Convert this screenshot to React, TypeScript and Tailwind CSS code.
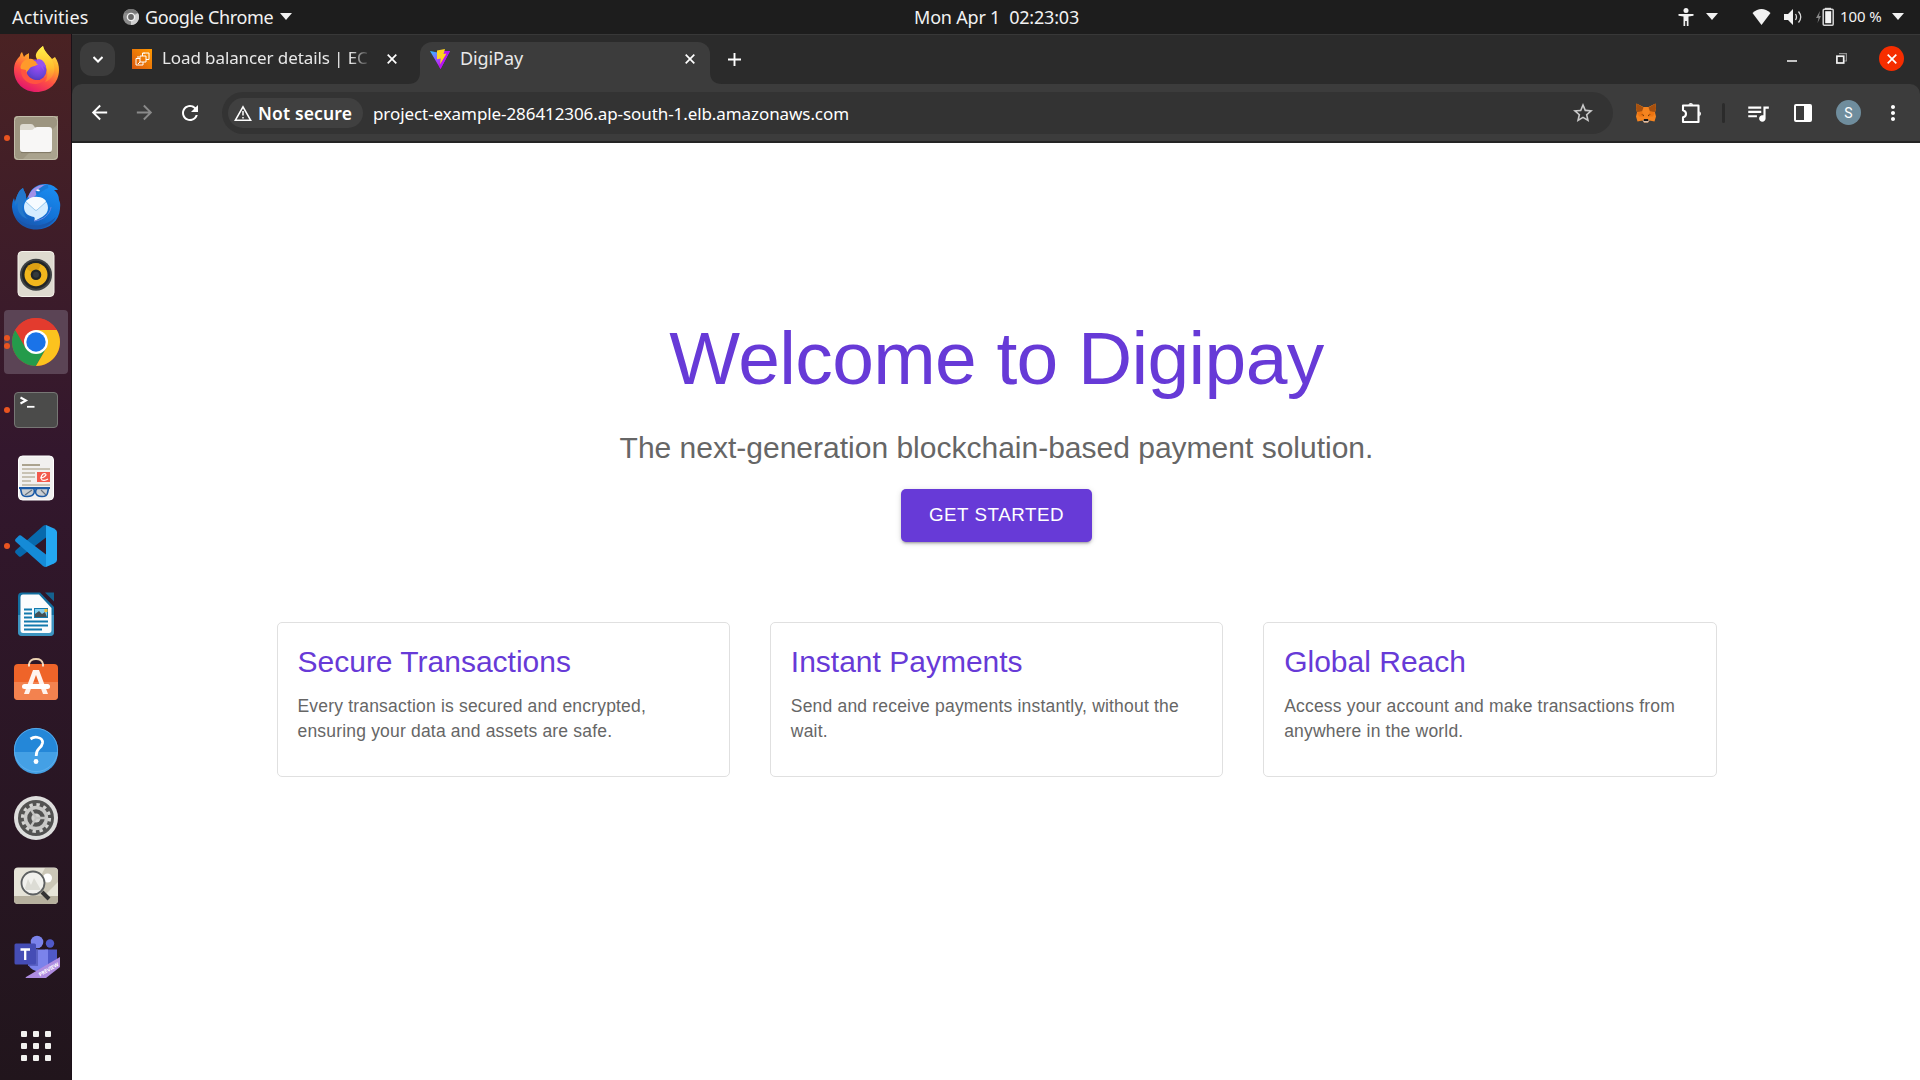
import type { ReactNode } from "react";
import { MdArrowBack, MdArrowForward, MdRefresh, MdStarBorder, MdQueueMusic, MdMoreVert } from "react-icons/md";

const Svg = ({ children }: { children: ReactNode }) => (
  <svg viewBox="0 0 48 48" className="block size-12 overflow-visible">{children}</svg>
);

const Firefox = () => (
  <Svg>
    <defs>
      <linearGradient id="ffa" x1="0.8" y1="0" x2="0.3" y2="1">
        <stop offset="0" stopColor="#fff44f" /><stop offset="0.35" stopColor="#ffa72a" /><stop offset="0.65" stopColor="#ff4f45" /><stop offset="1" stopColor="#e0126f" />
      </linearGradient>
      <linearGradient id="ffb" x1="0.5" y1="0" x2="0.5" y2="1">
        <stop offset="0" stopColor="#fff24a" /><stop offset="0.6" stopColor="#ffbd2e" /><stop offset="1" stopColor="#ff7139" />
      </linearGradient>
      <radialGradient id="ffc" cx="0.6" cy="0.3" r="0.8">
        <stop offset="0" stopColor="#a04bf5" /><stop offset="0.6" stopColor="#6b45d8" /><stop offset="1" stopColor="#4a35b0" />
      </radialGradient>
    </defs>
    <path d="M2 24C2 17 5 13 8 10C8 8 9 7 10 6L12 11C14 8 16 8 17 7L17 13L25 14C23 8 27 3 31 0C32 6 37 9 40 13L43 11C46 15 47 20 47 24C47 37 37 46 24.500 46C12 46 2 37 2 24Z" fill="url(#ffa)" />
    <path d="M31 0C32 6 38 9 41 16C45 25 40 34 33 36C36 32 36 26 34 21C32 15 26 15 24 11C23 7 27 3 31 0Z" fill="url(#ffb)" />
    <circle cx="24" cy="24" r="10.500" fill="url(#ffc)" />
    <path d="M9 19C11 14 16 12 20 13C22 14 23 16 27 17C26 20 20 20 18 22C16 25 15 25 14 28C11 25 7 23 9 19Z" fill="#ff9a2b" />
    <path d="M14 24C15 34 27 37 34 31C31 39 20 40 14 35C10 32 9 28 9 23Z" fill="#ff5340" />
    <path d="M26 13C31 13 34 18 34 22L31 20L32 25C29 20 27 19 24 17Z" fill="#9654ed" />
  </Svg>
);

const Files = () => (
  <Svg>
    <rect x="2" y="2" width="44" height="44" rx="4" fill="#aaa38e" />
    <path d="M6 2H46V10L10 46H6Q2 46 2 42V6Q2 2 6 2Z" fill="#9d9580" />
    <rect x="2.500" y="2.500" width="43" height="43" rx="4" fill="none" stroke="#c2bca9" strokeWidth="1" />
    <path d="M8 13Q8 10 11 10H19Q21 10 22 12L24 15H36V24H8Z" fill="#dedad0" />
    <path d="M8 16H19Q21 16 22 14.500T25 13H37Q40 13 40 16V35Q40 38 37 38H11Q8 38 8 35Z" fill="#f8f7f6" />
    <path d="M9 38.600H39" stroke="#7f7865" />
  </Svg>
);

const Thunderbird = () => (
  <Svg>
    <defs><linearGradient id="tb" x1="0.7" y1="0" x2="0.3" y2="1"><stop offset="0" stopColor="#1b8cf0" /><stop offset="0.6" stopColor="#1272d6" /><stop offset="1" stopColor="#1b52a8" /></linearGradient></defs>
    <path d="M17 13C19 6 26 2 33 2C38 2 43 4 46 8L42 8C46 11 47 15 47 18C49 22 48 25 48 27C47 39 38 47 25 47.500C11 48 1 38 0 25C0 21 1 18 2 16L3 20C5 14 6 9 11 6C12 10 15 12 14 17Z" fill="url(#tb)" />
    <path d="M3 20C5 14 6 9 11 6C12 10 15 12 14 17C8 23 10 32 16 37C8 35 4 28 6 20L3 24Z" fill="#2377cb" />
    <path d="M16 15C19 7 26 2 35 3C28 5 27 11 22 15L18 17Z" fill="#a090e8" />
    <path d="M24 11C28 10 30 5 36 4" stroke="#1979d6" strokeWidth="4" fill="none" />
    <path d="M12 25C12 19 17 16 22 15C31 15 36 19 36 26C36 34 26 37 22 39C23 37 23 36 22 35C16 34 12 31 12 25Z" fill="#d6edff" />
    <path d="M14 19Q20 14 26 15Q31 15 34 19L25 28Q24 29 23 28Z" fill="#f6fbff" />
    <path d="M14 20L23 28Q24 29 25 28L34 20" fill="none" stroke="#9ac9ee" />
    <path d="M24 8Q27 6 28 9Q25 10 24 8Z" fill="#fff" />
    <path d="M22 39C32 38 38 32 39 25" fill="none" stroke="#6a85e5" />
    <path d="M3 34C13 46 31 47 44 35C37 49 12 52 3 34Z" fill="#1957ac" />
  </Svg>
);

const Rhythmbox = () => (
  <Svg>
    <rect x="6" y="1.500" width="36" height="45" rx="4" fill="#deDACF" stroke="#f4f1ea" />
    <circle cx="24" cy="24.700" r="16" fill="#3f4244" />
    <circle cx="24" cy="24.700" r="14" fill="#222627" />
    <circle cx="24" cy="24.700" r="11.500" fill="#f1b71d" />
    <path d="M24 24.700L14 18.500A11.500 11.500 0 0 1 29 14.500Z" fill="#dca013" />
    <circle cx="24" cy="24.700" r="5.300" fill="#222627" />
    <circle cx="24" cy="24.700" r="3" fill="#353a3c" />
  </Svg>
);

const Chrome = () => (
  <Svg>
    <circle cx="24" cy="24" r="24" fill="#e33b2e" />
    <path d="M3.220 12A24 24 0 0 0 24 48L34.400 30L24 24Z" fill="#249b4b" />
    <path d="M24 48A24 24 0 0 0 44.780 12H24L34.400 30Z" fill="#fcc31e" />
    <path d="M3.220 12A24 24 0 0 1 44.780 12H24L13.600 30Z" fill="#e33b2e" />
    <circle cx="24" cy="24" r="12" fill="#fff" />
    <circle cx="24" cy="24" r="9.700" fill="#1a73e8" />
  </Svg>
);

const TerminalIcon = () => (
  <Svg>
    <rect x="2.500" y="6.500" width="43" height="35" rx="3.500" fill="#4b4b4a" stroke="#777775" />
    <path d="M8.500 11.500L14 14.500L8.500 17.500" fill="none" stroke="#fff" strokeWidth="2" />
    <path d="M15 20.800H22.500" stroke="#fff" strokeWidth="1.800" />
  </Svg>
);

const Evince = () => (
  <Svg>
    <rect x="6.500" y="2" width="35" height="44" rx="4" fill="#f1f0ef" stroke="#fff" />
    <path d="M10 11H28" stroke="#aba38f" strokeWidth="2" />
    <path d="M10 15H38M10 19H23M10 23H23M10 27H19M10 31H38" stroke="#c8c2b4" strokeWidth="2" />
    <rect x="25" y="18" width="13" height="10" fill="#f2594d" />
    <path d="M28 24Q32 24 34 21Q34 19 31 20Q28 23 30 26Q33 27 36 25" fill="none" stroke="#fff" strokeWidth="1.200" />
    <g fill="#b9bfc6" fillOpacity="0.7" stroke="#1b5aa6" strokeWidth="1.600"><path d="M8.500 34.500H21Q23 35 22 39Q21 42.500 15 42.500Q10 42.500 9.500 39Z" /><path d="M24 36Q24 34.500 26 34.500H36.500L35.500 39Q35 42.500 30 42.500Q24 42.500 23.500 38Z" /></g>
    <path d="M7 34H38" stroke="#1b5aa6" strokeWidth="2" />
    <path d="M13 41L20 36M29 36L34 41" stroke="#66727f" strokeWidth="1.200" />
  </Svg>
);

const VsCode = () => (
  <Svg>
    <path d="M34 3L42 6.500Q45 8 45 10V38Q45 40 42 41.500L34 45Z" fill="#24a7f2" />
    <path d="M3.500 31L7 34.500Q8 35 9 34.500L34 15.500V3Q32 3 31 4L3.500 28.500Q2.500 30 3.500 31Z" fill="#0769ad" />
    <path d="M3.500 17L7 13.500Q8 13 9 13.500L34 32.500V45Q32 45 31 44L3.500 19.500Q2.500 18 3.500 17Z" fill="#158bd7" />
  </Svg>
);

const Writer = () => (
  <Svg>
    <path d="M10 2.500H28L42 17V42Q42 46 38 46H10Q6 46 6 42V6.500Q6 2.500 10 2.500Z" fill="#126e9f" />
    <path d="M6 25H42V42Q42 46 38 46H10Q6 46 6 42Z" fill="#3d94c0" />
    <path d="M11 4.500H27L39.500 18V40Q39.500 43 37 43H11Q8.500 43 8.500 40V7.500Q8.500 4.500 11 4.500Z" fill="#fbfcfd" />
    <path d="M33 2.500H42V11.500Z" fill="#15618e" />
    <path d="M12 19.500H20M12 23.500H20M12 27.500H20M12 31.500H36M12 35.500H36M12 39.500H30" stroke="#1279ad" strokeWidth="2" />
    <rect x="22.500" y="18.500" width="13" height="9" fill="#83cfee" stroke="#1279ad" />
    <path d="M23 27V24L27 21L30 24L33 22L35 27Z" fill="#445054" /><rect x="32.500" y="19" width="3" height="3" fill="#f4bd32" />
  </Svg>
);

const Software = () => (
  <Svg>
    <path d="M17 9V6Q18 1 24 1Q30 1 31 6V9" fill="none" stroke="#ecd2b2" strokeWidth="1.800" />
    <rect x="2" y="6" width="44" height="36" rx="4" fill="#ef6429" />
    <path d="M2 24H46V38Q46 42 42 42H6Q2 42 2 38Z" fill="#f3824f" />
    <path d="M17 6V8.500M31 6V8.500" stroke="#f5dfc9" strokeWidth="2" />
    <path d="M21 12H27L36 36H31L24 17L17 36H12Z" fill="#fff3ee" />
    <rect x="10" y="26" width="28" height="5" rx="2.500" fill="#fff" />
  </Svg>
);

const Help = () => (
  <Svg>
    <circle cx="24" cy="24" r="22" fill="#2487d8" /><path d="M2 26H46A22 22 0 0 1 2 26Z" fill="#44a0e5" />
    <circle cx="24" cy="24" r="21.600" fill="none" stroke="#63b3ef" strokeWidth="0.800" />
    <path d="M18.500 13Q22 10.500 26 11.500Q31 12.500 30.500 17Q30 20 27 22.500Q24.200 25 24.200 30" fill="none" stroke="#fff" strokeWidth="2.800" />
    <circle cx="24" cy="35.500" r="2.400" fill="#fff" />
  </Svg>
);

const Settings = () => (
  <Svg>
    <circle cx="24" cy="24" r="22" fill="#dededd" /><circle cx="24" cy="24" r="18" fill="#535352" />
    <circle cx="24" cy="24" r="13.500" fill="none" stroke="#d4d4d2" strokeWidth="3.200" strokeDasharray="3.400 3.670" />
    <circle cx="24" cy="24" r="10.500" fill="none" stroke="#c9c9c7" strokeWidth="3.500" />
    <circle cx="24" cy="24" r="4.600" fill="#d4d4d2" />
    <path d="M24 24H34M24 24L19 15.500M24 24L19 32.500" stroke="#c3c3c1" strokeWidth="2.400" />
  </Svg>
);

const Magnifier = () => (
  <Svg>
    <rect x="2" y="5.500" width="44" height="36.500" rx="4" fill="#e6e4d8" />
    <path d="M33 6H42Q46 6 46 10V20L32 34H18Z" fill="#cbc7b7" />
    <path d="M2 34H46V38Q46 42 42 42H6Q2 42 2 38Z" fill="#b6b09e" />
    <circle cx="35.500" cy="16" r="4.500" fill="#fff" />
    <circle cx="21" cy="21" r="11.500" fill="#f1f1ed" stroke="#5d6061" strokeWidth="1.800" />
    <path d="M13 26L16 17L19 23L22 16L29 28H14Z" fill="#dcdcd5" />
    <path d="M30 30L37 37" stroke="#343434" strokeWidth="4" />
  </Svg>
);

const Teams = () => (
  <Svg>
    <circle cx="25" cy="12" r="6.300" fill="#7b83eb" /><circle cx="38" cy="13.500" r="4.200" fill="#5059c9" />
    <path d="M33 19.500H45V35Q41 40 35 37Z" fill="#5059c9" />
    <path d="M16 19.500H36V36Q30 42 24 41Q17 39 16 33Z" fill="#7b83eb" />
    <path d="M22 19.500H26V36H16V34H22Z" fill="#5a62c3" />
    <rect x="2.500" y="13.500" width="21.500" height="21" rx="1.500" fill="#454db5" />
    <path d="M8.500 19.500H18M13.200 19.500V30" stroke="#fff" strokeWidth="2.300" />
    <path d="M48 27V37L34 48H14Q13 48 14 47Z" fill="#ae8ce0" />
    <text transform="translate(28 46.500) rotate(-30)" fill="#fff" fontSize="5.200" fontWeight="700" fontFamily="Noto Sans, sans-serif" textLength="22">PREVIEW</text>
  </Svg>
);

const Dot = ({ at }: { at: string }) => <span className={`absolute left-1 size-1.5 rounded-full bg-[#e95420] ${at}`} />;

const dock: { name: string; icon: ReactNode; dots: number; active?: boolean }[] = [
  { name: "Firefox", icon: <Firefox />, dots: 0 },
  { name: "Files", icon: <Files />, dots: 1 },
  { name: "Thunderbird", icon: <Thunderbird />, dots: 0 },
  { name: "Rhythmbox", icon: <Rhythmbox />, dots: 0 },
  { name: "Chrome", icon: <Chrome />, dots: 2, active: true },
  { name: "Terminal", icon: <TerminalIcon />, dots: 1 },
  { name: "Document Viewer", icon: <Evince />, dots: 0 },
  { name: "Code", icon: <VsCode />, dots: 1 },
  { name: "Writer", icon: <Writer />, dots: 0 },
  { name: "Software", icon: <Software />, dots: 0 },
  { name: "Help", icon: <Help />, dots: 0 },
  { name: "Settings", icon: <Settings />, dots: 0 },
  { name: "Image Viewer", icon: <Magnifier />, dots: 0 },
  { name: "Teams", icon: <Teams />, dots: 0 },
];

const Dock = () => (
  <nav className="flex w-[72px] shrink-0 flex-col border-r border-[#1b1118] bg-linear-to-b from-[#4a2223] via-[#33172d] via-40% to-[#21151c] pt-0.5">
    {dock.map((d) => (
      <div key={d.name} className="relative flex h-[68px] items-center justify-center pl-px">
        <div className={d.active ? "grid size-16 place-items-center rounded bg-[#5b4455]" : "grid size-16 place-items-center"}>{d.icon}</div>
        {d.dots === 1 && <Dot at="top-[31px]" />}
        {d.dots === 2 && <><Dot at="top-[27px]" /><Dot at="top-[35px]" /></>}
      </div>
    ))}
    <div className="mt-auto mb-[19px] ml-[21px] grid w-[30px] grid-cols-3 gap-1.5">
      {Array.from({ length: 9 }, (_, i) => <span key={i} className="size-1.5 rounded-[1px] bg-[#f2f1ef]" />)}
    </div>
  </nav>
);

const Caret = () => <svg viewBox="0 0 12 7" className="h-[7px] w-3"><path d="M0 0H12L6 7Z" fill="#f2f2f2" /></svg>;

const TopBar = () => (
  <header className="flex h-[34px] items-center bg-[#1d1d1d] pb-px font-['Noto_Sans',sans-serif] text-[18px] leading-none whitespace-pre text-[#f2f2f2]">
    <div className="w-[111px] pl-3 tracking-[0.15px]">Activities</div>
    <div className="flex w-[803px] items-center">
      <svg viewBox="0 0 16 16" className="mx-3 mr-1.5 size-4"><circle cx="8" cy="8" r="8" fill="#8c8c8c" /><path d="M8 8L15 4A8 8 0 0 1 8 16Z" fill="#d0d0d0" /><path d="M1 4A8 8 0 0 1 15 4H8Z" fill="#777" /><circle cx="8" cy="8" r="4.300" fill="#f2f2f2" /><circle cx="8" cy="8" r="2.900" fill="#666" /></svg>
      <span className="mr-[5px] w-[130px] tracking-[-0.35px]">Google Chrome</span>
      <Caret />
    </div>
    <div className="w-[170px] tracking-[-0.2px]">Mon Apr 1  02:23:03</div>
    <div className="flex flex-1 items-center justify-end pr-4">
      <svg viewBox="0 0 16 18" className="mr-3 h-[18px] w-4" fill="#f2f2f2"><circle cx="8" cy="2.500" r="2.500" /><path d="M0.500 6H15.500V7.800L10.500 8.600V18H8.800V13H7.200V18H5.500V8.600L0.500 7.800Z" /></svg>
      <Caret />
      <svg viewBox="0 0 18 16" className="ml-[34px] h-4 w-[19px]" fill="#f2f2f2"><path d="M0 4Q9-4 18 4L9 16Z" /></svg>
      <svg viewBox="0 0 18 16" className="ml-[13px] h-4 w-[18px]"><path d="M0 5H4L9 0V16L4 11H0Z" fill="#f2f2f2" /><path d="M11.500 5Q13.500 8 11.500 11M14.500 2.500Q19 8 14.500 13.500" fill="none" stroke="#d8d8d8" strokeWidth="1.300" /></svg>
      <svg viewBox="0 0 18 19" className="ml-[14px] h-[19px] w-[18px]"><path d="M4 4L0 11H2.500L1.500 16L5 9H3Z" fill="#888" /><path d="M9 2.500V0.800H15V2.500" fill="#eee" /><rect x="7.200" y="2.200" width="10" height="16" rx="1" fill="none" stroke="#d4d4d4" strokeWidth="1.500" /><rect x="9.200" y="4.200" width="6" height="12" fill="#f5f5f5" /></svg>
      <span className="ml-1.5 w-[44px] text-[15px] leading-none tracking-[-0.1px]">100 %</span>
      <span className="ml-2"><Caret /></span>
    </div>
  </header>
);

const Cross = () => <svg viewBox="0 0 10 10" className="size-2.5"><path d="M0.700 0.700L9.300 9.300M9.300 0.700L0.700 9.300" stroke="#fff" strokeWidth="1.700" /></svg>;

const TabStrip = () => (
  <div className="flex h-[50px] items-start border-t border-[#383838] bg-[#2b2b2b] font-['Noto_Sans',sans-serif] text-[17px] text-[#e8e8e8]">
    <div className="mt-[7px] ml-2 grid h-[34px] w-[35px] place-items-center rounded-xl bg-[#3c3c3c]">
      <svg viewBox="0 0 10 7" className="h-[7px] w-2.5"><path d="M0.500 1L5 5.500L9.500 1" fill="none" stroke="#fff" strokeWidth="2" /></svg>
    </div>
    <div className="flex h-[48px] w-[305px] items-center pl-[17px]">
      <svg viewBox="0 0 20 20" className="size-5 shrink-0"><defs><linearGradient id="ec2" x1="0" y1="1" x2="1" y2="0"><stop stopColor="#d85810" /><stop offset="1" stopColor="#ff9900" /></linearGradient></defs><path d="M0 0H20V20H0Z" fill="url(#ec2)" /><path d="M8 7H14V13H8ZM10.500 7V4H17V10.500H14M8 9.500H4V16H11V13M6 7V9M12 5V3.500M8 13L6 15" fill="none" stroke="#fff" strokeWidth="1" /></svg>
      <div className="ml-2.5 w-[209px] mask-r-from-90% pb-0.5 tracking-[-0.1px] whitespace-nowrap">Load balancer details | EC</div>
      <span className="ml-4"><Cross /></span>
    </div>
    <div className="relative mt-[7px] flex h-[42px] w-[290px] items-center rounded-t-xl bg-[#3c3c3c] pr-[15px] pb-2 pl-2.5">
      <svg viewBox="0 0 12 12" className="absolute bottom-0 -left-3 size-3"><path d="M12 0V12H0Q12 12 12 0Z" fill="#3c3c3c" /></svg>
      <svg viewBox="0 0 12 12" className="absolute -right-3 bottom-0 size-3"><path d="M0 0V12H12Q0 12 0 0Z" fill="#3c3c3c" /></svg>
      <svg viewBox="0 0 20 20" className="size-5"><defs><linearGradient id="va" x2="0.6" y2="1"><stop stopColor="#25c8ff" /><stop offset="0.500" stopColor="#9b4dff" /><stop offset="1" stopColor="#d800e8" /></linearGradient></defs><path d="M0 2L10 4L20 2L10.500 20Z" fill="url(#va)" /><path d="M14 2L20 2L10.500 20L9 17Z" fill="#b514f5" /><path d="M7 1.500L15 0L13.500 5L16.500 4.500L10 15.500L10.800 9.500L7 10.300Z" fill="#ffd51f" /></svg>
      <span className="ml-2.5 flex-1 pb-px text-[18px] tracking-[-0.1px]">DigiPay</span>
      <Cross />
    </div>
    <div className="ml-[18px] flex h-[49px] items-center"><svg viewBox="0 0 13 13" className="size-[13px]"><path d="M6.500 0V13M0 6.500H13" stroke="#fff" strokeWidth="1.900" /></svg></div>
    <div className="ml-auto flex h-[47px] items-center pr-4">
      <span className="mt-[5px] mr-[39px] h-[2px] w-2.5 bg-[#c5c5c5]" />
      <svg viewBox="0 0 11 11" className="mr-[32px] size-[11px]"><path d="M3 0.600H10.400V8H8" fill="none" stroke="#909090" strokeWidth="1.200" /><rect x="0.900" y="3.200" width="6.800" height="6.800" fill="none" stroke="#f2f2f2" strokeWidth="1.700" /></svg>
      <span className="grid size-[25px] place-items-center rounded-full bg-[#f62d00]"><Cross /></span>
    </div>
  </div>
);

const Fox = () => (
  <svg viewBox="0 0 20 19" className="size-5">
    <path d="M0.500 0L7.500 3.500H12.500L19.500 0L20 5L19 9L20 13L18.500 18L13.500 17L12 19H8L6.500 17L1.500 18L0 13L1 9L0 5Z" fill="#f5841f" />
    <path d="M0.500 0L7.500 4L6 8L1 8.500L0 5ZM19.500 0L12.500 4L14 8L19 8.500L20 5Z" fill="#a5500f" />
    <path d="M1 9L6 8L8 13L3 13ZM19 9L14 8L12 13L17 13Z" fill="#ee7410" />
    <path d="M5 10.500L8 11.500V12.800ZM15 10.500L12 11.500V12.800Z" fill="#6b3408" />
    <path d="M6.500 16.500H13.500L12 19H8Z" fill="#d5bfb2" /><path d="M8 15.500H12L12.500 17.500H7.500Z" fill="#161616" />
  </svg>
);

const Puzzle = () => (
  <svg viewBox="0 0 22 22" className="size-[22px]" fill="none" stroke="#fff" strokeWidth="2.100" strokeLinejoin="round">
    <path d="M2 3.500H17.500V20H2V15.300Q5 14.500 5 11.700Q5 9 2 8.200Z" />
    <path d="M7.300 2.700A2.700 2.700 0 0 1 12.300 2.700ZM18.300 9.200A2.700 2.700 0 0 1 18.300 14.200Z" fill="#fff" stroke="none" />
  </svg>
);

const Toolbar = () => (
  <div className="bg-[#2b2b2b]">
    <div className="flex h-[59px] items-center rounded-t-[10px] border-b-2 border-[#242424] bg-[#3c3c3c] text-white">
      <MdArrowBack className="ml-4 size-[23px]" />
      <MdArrowForward className="ml-[22px] size-[23px] text-[#8a8a8a]" />
      <MdRefresh className="ml-[22px] size-[24px]" />
      <div className="ml-5 flex h-[42px] w-[1391px] items-center rounded-full bg-[#333333] pl-1.5 font-['Noto_Sans',sans-serif]">
        <div className="flex h-[30px] w-[135px] items-center rounded-full bg-[#404040] pl-1.5">
          <svg viewBox="0 0 18 16" className="h-4 w-[18px]"><path d="M9 1.800L16.600 15.200H1.400Z" fill="none" stroke="#fff" strokeWidth="1.600" /><path d="M9 6V10.500M9 12V13.500" stroke="#fff" strokeWidth="1.500" /></svg>
          <span className="ml-1.5 pt-0.5 text-[17.5px] leading-none font-semibold tracking-[0.15px] whitespace-nowrap">Not secure</span>
        </div>
        <span className="ml-2.5 flex-1 pt-0.5 text-[17px] leading-none tracking-[-0.08px]">project-example-286412306.ap-south-1.elb.amazonaws.com</span>
        <MdStarBorder className="mr-[18px] size-6 text-[#c8c8c8]" />
      </div>
      <span className="ml-[23px]"><Fox /></span>
      <span className="ml-[25px]"><Puzzle /></span>
      <span className="ml-[19px] h-5 w-[3px] rounded bg-[#2b2b2b]" />
      <MdQueueMusic className="ml-5 size-[26px]" />
      <svg viewBox="0 0 18 18" className="ml-[23px] size-[18px]"><rect x="1" y="1" width="16" height="16" rx="1" fill="none" stroke="#fff" strokeWidth="2" /><path d="M10 1H17V17H10Z" fill="#fff" /></svg>
      <span className="ml-6 grid size-[25px] place-items-center rounded-full bg-[#6f8d9d] font-['Roboto',sans-serif] text-sm">S</span>
      <MdMoreVert className="ml-5 size-6" />
    </div>
  </div>
);

const features = [
  { title: "Secure Transactions", text: "Every transaction is secured and encrypted, ensuring your data and assets are safe." },
  { title: "Instant Payments", text: "Send and receive payments instantly, without the wait." },
  { title: "Global Reach", text: "Access your account and make transactions from anywhere in the world." },
];

const Page = () => (
  <main className="flex flex-1 flex-col items-center bg-white pt-[170px] pl-px font-['Liberation_Sans',sans-serif]">
    <h1 className="text-[75px] leading-[90px] tracking-[-0.625px] text-[#673ad7]">Welcome to Digipay</h1>
    <p className="mt-[25px] text-[30px] leading-10 text-[#666666]">The next-generation blockchain-based payment solution.</p>
    <button className="mt-[21px] h-[53px] w-[191px] rounded-[5px] bg-[#673ad7] pb-0.5 text-[18.75px] leading-[33px] tracking-[0.536px] text-white shadow-[0_3px_2px_-2px_rgba(0,0,0,.2),0_2px_3px_rgba(0,0,0,.14),0_1px_6px_rgba(0,0,0,.12)]">GET STARTED</button>
    <section className="mt-20 grid w-[1440px] grid-cols-3 gap-10">
      {features.map((f) => (
        <article key={f.title} className="h-[155px] rounded-[5px] border border-[#e0e0e0] px-5 pt-[19px]">
          <h2 className="text-[30px] leading-10 text-[#673ad7]">{f.title}</h2>
          <p className="mt-3 text-[17.5px] leading-[25px] tracking-[0.187px] text-[#666666]">{f.text}</p>
        </article>
      ))}
    </section>
  </main>
);

export default function App() {
  return (
    <div className="flex h-[1080px] w-[1920px] flex-col overflow-hidden">
      <TopBar />
      <div className="flex min-h-0 flex-1">
        <Dock />
        <div className="flex flex-1 flex-col">
          <TabStrip />
          <Toolbar />
          <Page />
        </div>
      </div>
    </div>
  );
}
